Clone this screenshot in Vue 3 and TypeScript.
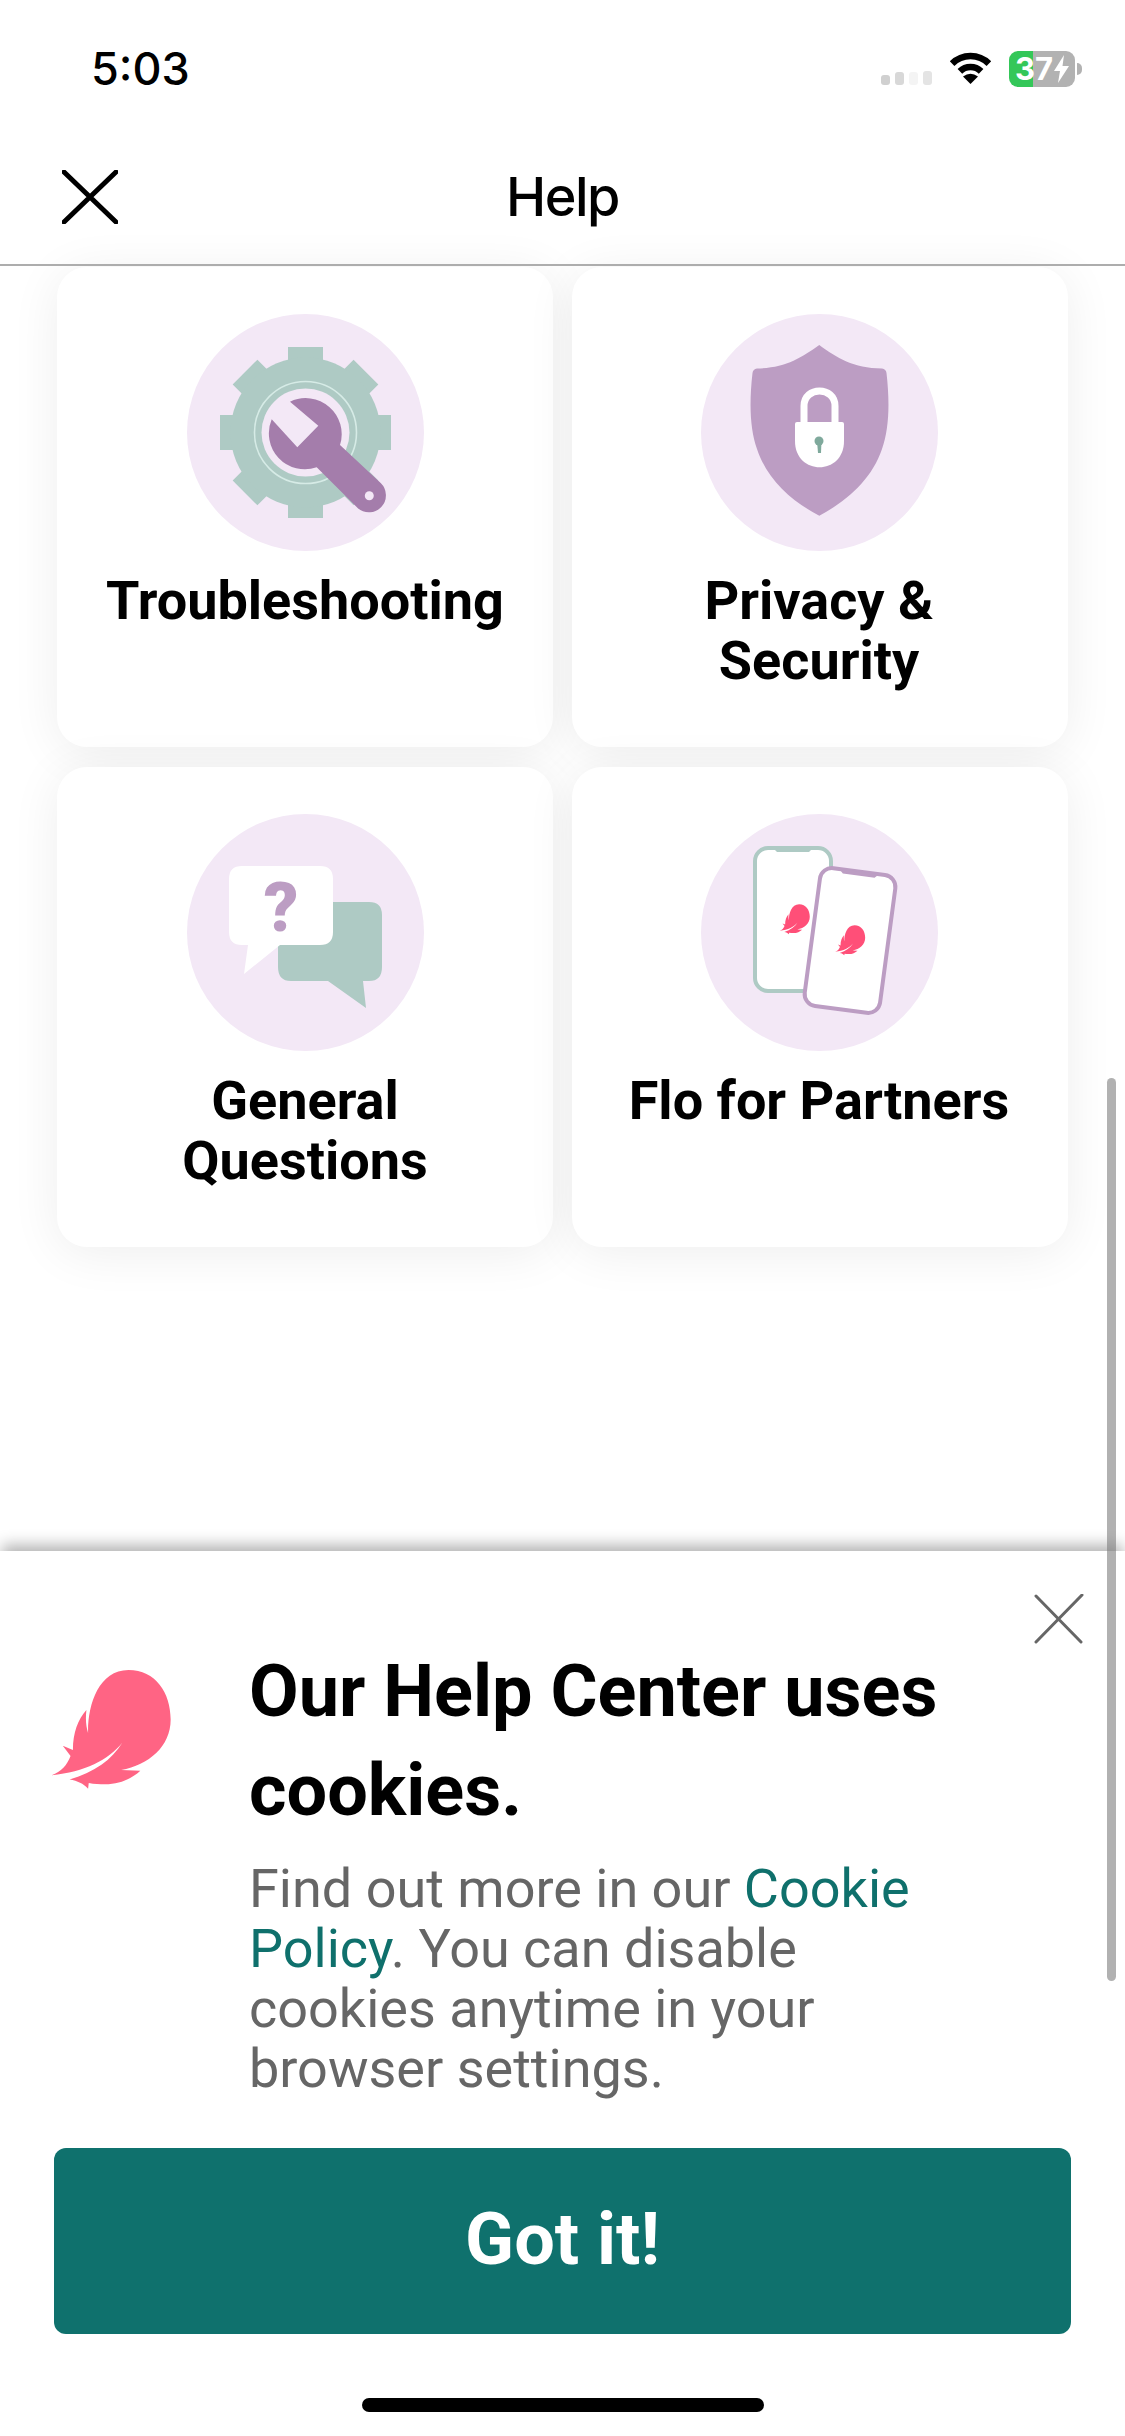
<template>
  <div class="screen">
    <div class="status">
      <span class="time">5:03</span>
      <div class="status-right">
        <div class="signal">
          <i class="s1"></i><i class="s2"></i><i class="s3"></i><i class="s4"></i>
        </div>
        <svg class="wifi" width="45" height="33" viewBox="0 0 45 33">
          <path d="M4.1 12.6A26 26 0 0 1 40.9 12.6" fill="none" stroke="#000" stroke-width="6.5" />
          <path d="M11.9 20.4A15 15 0 0 1 33.1 20.4" fill="none" stroke="#000" stroke-width="6.5" />
          <path d="M22.5 33L15 25.5Q22.5 20 30 25.5Z" fill="#000" />
        </svg>
        <div class="battery">
          <span>37</span>
          <svg width="15" height="28" viewBox="0 0 15 28">
            <path d="M10 0L0 16H6L4 28L15 11H8.5Z" fill="#fff" />
          </svg>
        </div>
        <i class="nub"></i>
      </div>
    </div>

    <header class="nav">
      <svg class="nav-close" width="56" height="54" viewBox="0 0 56 54">
        <path d="M2 2L54 52M54 2L2 52" stroke="#000" stroke-width="5" stroke-linecap="round" />
      </svg>
      <h1>Help</h1>
    </header>

    <main class="content">
      <div class="grid">
        <a v-for="card in cards" :key="card.id" class="card">
          <svg class="badge" width="237" height="237" viewBox="0 0 237 237">
            <circle cx="118.5" cy="118.5" r="118.5" fill="#f3e8f6" />

            <g v-if="card.id === 'trouble'">
              <rect
                v-for="a in teeth"
                :key="a"
                x="101"
                y="33"
                width="35"
                height="40"
                fill="#aecac4"
                :transform="`rotate(${a} 118.5 118.5)`"
              />
              <circle cx="118.5" cy="118.5" r="75" fill="#aecac4" />
              <circle cx="118.5" cy="118.5" r="51" fill="none" stroke="#d6ebe6" stroke-width="1.6" />
              <circle cx="118.5" cy="118.5" r="44" fill="#f3e8f6" />
              <path
                d="M103 87.7A36 36 0 0 1 153 131L193.7 169.1A17 17 0 0 1 170.9 194.3L129.7 153.3A36 36 0 0 1 84.7 105.3L110.3 133.3L131.3 111.7Z"
                fill="#a47dab"
              />
              <circle cx="182.3" cy="181.7" r="4.5" fill="#f3e8f6" />
            </g>

            <g v-else-if="card.id === 'privacy'">
              <path
                d="M118.3 31C100 44 84 54 56 54.5Q52 55 51.5 59C48 90 49 115 56 135C66 165 90 187 118.3 201.7C146 187 171 165 181 135C188 115 189 90 185.5 59Q185 55 181 54.5C152 54 136 44 118.3 31Z"
                fill="#bc9dc3"
              />
              <path d="M103 112V92C103 72 134 72 134 92V112" fill="none" stroke="#fff" stroke-width="7" />
              <path d="M94 110Q94 108 96 108H141Q143 108 143 110V127C143 162 94 162 94 127Z" fill="#fff" />
              <circle cx="118" cy="127" r="4.5" fill="#7fa99c" />
              <path d="M116 127H120.5L120 139H117Z" fill="#7fa99c" />
            </g>

            <g v-else-if="card.id === 'general'">
              <path
                d="M104 88H182Q195 88 195 101V153Q195 167 182 167H176L179 194L141 167H104Q91 167 91 153V101Q91 88 104 88Z"
                fill="#aecac4"
              />
              <path
                d="M55 52H133Q146 52 146 65V118Q146 131 133 131H93L57 160L61 131H55Q42 131 42 118V65Q42 52 55 52Z"
                fill="#fff"
              />
              <text x="94" y="117" class="question">?</text>
            </g>

            <g v-else>
              <rect x="54" y="34" width="76" height="143" rx="13" fill="#fff" stroke="#aecac4" stroke-width="4" />
              <path d="M72 34H112L108 38H76Z" fill="#aecac4" />
              <path :d="feather" fill="#ff4f78" transform="translate(78.6 90) scale(0.085) translate(-160 -510)" />
              <g transform="rotate(7.6 149 126.7)">
                <rect x="111" y="57" width="76" height="139" rx="12" fill="#fff" stroke="#bc9dc3" stroke-width="4" />
                <path d="M129 57H169L165 61H133Z" fill="#bc9dc3" />
              </g>
              <path :d="feather" fill="#ff4f78" transform="translate(134 111) scale(0.085) translate(-160 -510)" />
            </g>
          </svg>
          <span class="card-title">{{ card.title }}</span>
        </a>
      </div>
    </main>

    <section class="banner">
      <svg class="banner-close" width="50" height="50" viewBox="0 0 50 50">
        <path d="M2 2L47 48M48 1L2 48" stroke="#666" stroke-width="3" stroke-linecap="round" />
      </svg>
      <div class="banner-body">
        <svg class="logo" width="120" height="120" viewBox="160 510 356 356">
          <path :d="feather" fill="#ff6484" />
        </svg>
        <div>
          <h2>Our Help Center uses cookies.</h2>
          <p>
            Find out more in our <a class="link">Cookie Policy</a>. You can disable cookies anytime in your browser settings.
          </p>
        </div>
      </div>
      <button class="got-it" type="button">Got it!</button>
      <div class="home-bar"></div>
    </section>

    <div class="scrollbar"></div>
  </div>
</template>

<script setup lang="ts">
interface Card {
  id: string;
  title: string;
}

const cards: Card[] = [
  { id: 'trouble', title: 'Troubleshooting' },
  { id: 'privacy', title: 'Privacy & Security' },
  { id: 'general', title: 'General Questions' },
  { id: 'partners', title: 'Flo for Partners' },
];

const teeth = [0, 45, 90, 135, 180, 225, 270, 315];

const feather =
  'M270 700C268 620 300 513 390 513C470 513 515 580 515 660C515 740 450 795 368 810L425 812C400 835 365 852 320 852C305 852 288 851 272 848L270 865C255 850 240 842 215 838C290 815 340 780 372 728C330 780 260 815 162 825C190 815 208 795 218 768L195 738L225 750C225 700 240 660 265 632C262 660 264 680 270 700Z';
</script>

<style scoped>
.screen {
  position: relative;
  width: 1125px;
  height: 2436px;
  display: flex;
  flex-direction: column;
  overflow: hidden;
  background: #fff;
  font-family: Roboto, sans-serif;
}

.status {
  height: 140px;
  box-sizing: border-box;
  padding: 42px 43px 0 91px;
  display: flex;
  justify-content: space-between;
  align-items: flex-start;
}

.time {
  font-family: Inter, sans-serif;
  font-size: 45px;
  font-weight: 500;
  line-height: 53px;
  color: #000;
}

.status-right {
  display: flex;
  align-items: flex-start;
  padding-top: 9px;
}

.signal {
  display: flex;
  align-items: flex-end;
  gap: 5px;
  height: 34px;
  margin-right: 16px;
}

.signal i {
  display: block;
  width: 9px;
  border-radius: 3px;
}

.s1 { height: 10px; background: #d0d0d0; }
.s2 { height: 13px; background: #d8d8d8; }
.s3 { height: 13px; background: #f4f4f4; }
.s4 { height: 14px; background: #e4e4e4; }

.wifi {
  margin-right: 16px;
}

.battery {
  width: 66px;
  height: 36px;
  border-radius: 9px;
  background: linear-gradient(90deg, #34c759 36%, #b2b2b2 36%);
  display: flex;
  align-items: center;
  justify-content: center;
  gap: 1px;
  color: #fff;
  font-family: Inter, sans-serif;
  font-size: 31px;
  font-weight: 700;
  line-height: 36px;
}

.nub {
  display: block;
  width: 5px;
  height: 12px;
  margin: 12px 0 0 2px;
  background: #b2b2b2;
  border-radius: 0 5px 5px 0;
}

.nav {
  position: relative;
  height: 124px;
  border-bottom: 2px solid #adadad;
  display: flex;
  justify-content: center;
}

.nav h1 {
  margin: 0;
  font-family: Inter, sans-serif;
  font-size: 54px;
  font-weight: 500;
  letter-spacing: -1.5px;
  line-height: 114px;
  color: #000;
}

.nav-close {
  position: absolute;
  left: 62px;
  top: 30px;
}

.content {
  flex: 1;
  min-height: 0;
  padding: 1px 57px 0;
}

.grid {
  display: grid;
  grid-template-columns: 496px 496px;
  grid-auto-rows: 480px;
  column-gap: 19px;
  row-gap: 20px;
}

.card {
  box-sizing: border-box;
  padding: 47px 40px 0;
  border-radius: 30px;
  background: #fff;
  box-shadow: 0 6px 50px rgba(0, 0, 0, 0.07);
  display: flex;
  flex-direction: column;
  align-items: center;
  text-align: center;
}

.card:nth-child(even) {
  padding-right: 42px;
}

.badge {
  flex: none;
}

.question {
  font-family: Roboto, sans-serif;
  font-size: 68px;
  font-weight: 900;
  fill: #bc9dc3;
  text-anchor: middle;
}

.card-title {
  margin-top: 20px;
  font-size: 54px;
  font-weight: 700;
  line-height: 60px;
  color: #000;
}

.banner {
  position: relative;
  height: 885px;
  box-sizing: border-box;
  padding: 91px 54px 0;
  background: #fff;
  box-shadow: 0 -8px 14px -2px rgba(0, 0, 0, 0.3);
}

.banner-close {
  position: absolute;
  right: 41px;
  top: 43px;
}

.banner-body {
  display: grid;
  grid-template-columns: 195px 1fr;
  height: 506px;
}

.logo {
  margin: 27px 0 0 -3px;
}

.banner h2 {
  margin: 0 0 19px;
  padding-right: 90px;
  font-size: 72px;
  font-weight: 700;
  line-height: 99px;
  color: #000;
}

.banner p {
  margin: 0;
  padding-right: 100px;
  font-size: 54px;
  line-height: 60px;
  color: #666;
}

.link {
  color: #0f706c;
}

.got-it {
  display: block;
  width: 100%;
  height: 186px;
  padding: 0 0 3px;
  border: 0;
  border-radius: 12px;
  background: #0f716d;
  color: #fff;
  font-family: Roboto, sans-serif;
  font-size: 72px;
  font-weight: 700;
}

.home-bar {
  width: 402px;
  height: 14px;
  margin: 64px auto 0;
  border-radius: 7px;
  background: #000;
}

.scrollbar {
  position: absolute;
  left: 1107px;
  top: 1078px;
  width: 9px;
  height: 903px;
  border-radius: 5px;
  background: rgba(120, 120, 120, 0.58);
}
</style>

<style>
html,
body {
  margin: 0;
  background: #fff;
}
</style>
